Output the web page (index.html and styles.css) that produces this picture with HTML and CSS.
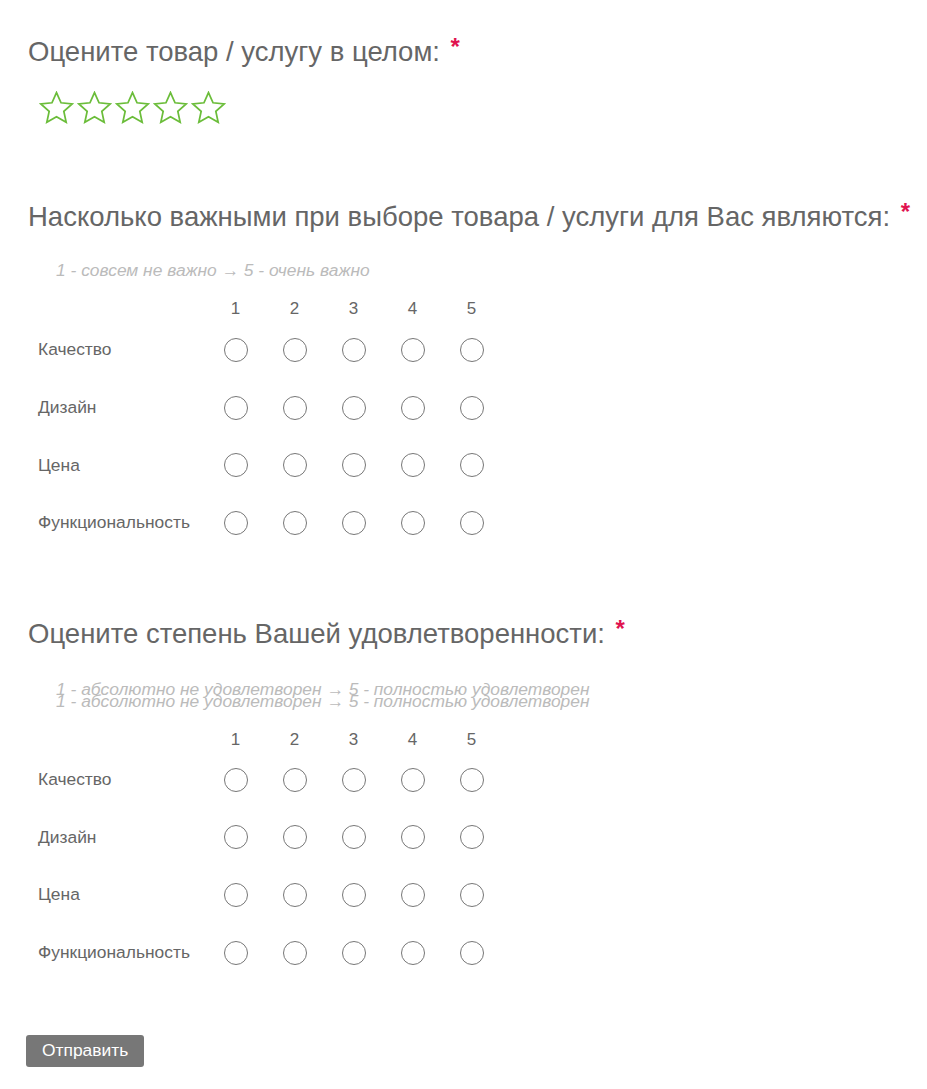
FILE: index.html
```html
<!DOCTYPE html>
<html lang="ru">
<head>
<meta charset="utf-8">
<title>Опрос</title>
<link rel="stylesheet" href="styles.css">
</head>
<body>
<form class="survey">
  <section class="q q-stars">
    <h2 class="q-title">Оцените товар / услугу в целом: <span class="req">*</span></h2>
    <div class="stars">
      <svg class="star" viewBox="0 0 34 33" width="35" height="34"><polygon points="17,1.5 21.41,11.43 32.22,12.56 24.13,19.82 26.4,30.44 17,25 7.6,30.44 9.87,19.82 1.78,12.56 12.59,11.43"/></svg>
      <svg class="star" viewBox="0 0 34 33" width="35" height="34"><polygon points="17,1.5 21.41,11.43 32.22,12.56 24.13,19.82 26.4,30.44 17,25 7.6,30.44 9.87,19.82 1.78,12.56 12.59,11.43"/></svg>
      <svg class="star" viewBox="0 0 34 33" width="35" height="34"><polygon points="17,1.5 21.41,11.43 32.22,12.56 24.13,19.82 26.4,30.44 17,25 7.6,30.44 9.87,19.82 1.78,12.56 12.59,11.43"/></svg>
      <svg class="star" viewBox="0 0 34 33" width="35" height="34"><polygon points="17,1.5 21.41,11.43 32.22,12.56 24.13,19.82 26.4,30.44 17,25 7.6,30.44 9.87,19.82 1.78,12.56 12.59,11.43"/></svg>
      <svg class="star" viewBox="0 0 34 33" width="35" height="34"><polygon points="17,1.5 21.41,11.43 32.22,12.56 24.13,19.82 26.4,30.44 17,25 7.6,30.44 9.87,19.82 1.78,12.56 12.59,11.43"/></svg>
    </div>
  </section>

  <section class="q q-matrix q-2">
    <h2 class="q-title">Насколько важными при выборе товара / услуги для Вас являются: <span class="req">*</span></h2>
    <p class="hint">1 - совсем не важно &rarr; 5 - очень важно</p>
    <div class="matrix">
      <div class="m-head"></div><div class="m-head">1</div><div class="m-head">2</div><div class="m-head">3</div><div class="m-head">4</div><div class="m-head">5</div>
      <div class="m-label">Качество</div><div class="m-cell"><span class="radio"></span></div><div class="m-cell"><span class="radio"></span></div><div class="m-cell"><span class="radio"></span></div><div class="m-cell"><span class="radio"></span></div><div class="m-cell"><span class="radio"></span></div>
      <div class="m-label">Дизайн</div><div class="m-cell"><span class="radio"></span></div><div class="m-cell"><span class="radio"></span></div><div class="m-cell"><span class="radio"></span></div><div class="m-cell"><span class="radio"></span></div><div class="m-cell"><span class="radio"></span></div>
      <div class="m-label">Цена</div><div class="m-cell"><span class="radio"></span></div><div class="m-cell"><span class="radio"></span></div><div class="m-cell"><span class="radio"></span></div><div class="m-cell"><span class="radio"></span></div><div class="m-cell"><span class="radio"></span></div>
      <div class="m-label">Функциональность</div><div class="m-cell"><span class="radio"></span></div><div class="m-cell"><span class="radio"></span></div><div class="m-cell"><span class="radio"></span></div><div class="m-cell"><span class="radio"></span></div><div class="m-cell"><span class="radio"></span></div>
    </div>
  </section>

  <section class="q q-matrix q-3">
    <h2 class="q-title">Оцените степень Вашей удовлетворенности: <span class="req">*</span></h2>
    <p class="hint hint-double"><span>1 - абсолютно не удовлетворен &rarr; 5 - полностью удовлетворен</span><span>1 - абсолютно не удовлетворен &rarr; 5 - полностью удовлетворен</span></p>
    <div class="matrix">
      <div class="m-head"></div><div class="m-head">1</div><div class="m-head">2</div><div class="m-head">3</div><div class="m-head">4</div><div class="m-head">5</div>
      <div class="m-label">Качество</div><div class="m-cell"><span class="radio"></span></div><div class="m-cell"><span class="radio"></span></div><div class="m-cell"><span class="radio"></span></div><div class="m-cell"><span class="radio"></span></div><div class="m-cell"><span class="radio"></span></div>
      <div class="m-label">Дизайн</div><div class="m-cell"><span class="radio"></span></div><div class="m-cell"><span class="radio"></span></div><div class="m-cell"><span class="radio"></span></div><div class="m-cell"><span class="radio"></span></div><div class="m-cell"><span class="radio"></span></div>
      <div class="m-label">Цена</div><div class="m-cell"><span class="radio"></span></div><div class="m-cell"><span class="radio"></span></div><div class="m-cell"><span class="radio"></span></div><div class="m-cell"><span class="radio"></span></div><div class="m-cell"><span class="radio"></span></div>
      <div class="m-label">Функциональность</div><div class="m-cell"><span class="radio"></span></div><div class="m-cell"><span class="radio"></span></div><div class="m-cell"><span class="radio"></span></div><div class="m-cell"><span class="radio"></span></div><div class="m-cell"><span class="radio"></span></div>
    </div>
  </section>

  <button type="button" class="submit">Отправить</button>
</form>
</body>
</html>
```

FILE: styles.css
```css
* { box-sizing: border-box; }
html, body { margin: 0; padding: 0; background: #fff; }
body {
  font-family: "Liberation Sans", Arial, sans-serif;
  color: #666;
}
.survey {
  padding: 37px 0 0 28px;
  display: flex;
  flex-direction: column;
  align-items: flex-start;
}
.q { margin: 0; }
.q-title {
  margin: 0;
  font-size: 27.5px;
  line-height: 30px;
  font-weight: normal;
  color: #666;
  white-space: nowrap;
}
.req {
  color: #e0134f;
  font-size: 24px;
  font-weight: bold;
  vertical-align: top;
  position: relative;
  top: -5px;
  margin-left: 3px;
}
.stars {
  display: flex;
  gap: 3px;
  margin: 24px 0 0 11px;
}
.star { display: block; }
.star polygon {
  fill: none;
  stroke: #6bbd3a;
  stroke-width: 1.7;
  stroke-linejoin: miter;
}
.q-2 { margin-top: 77px; }
.q-3 { margin-top: 67px; }
.hint {
  margin: 29px 0 0 28px;
  font-style: italic;
  font-size: 17.4px;
  line-height: 18px;
  color: #bbb;
  white-space: nowrap;
}
.hint-double {
  display: flex;
  flex-direction: column;
  line-height: 12px;
  margin-top: 34px;
  margin-left: 28px;
}
.matrix {
  display: grid;
  grid-template-columns: 168px repeat(5, 59px);
  grid-template-rows: 24px repeat(4, 57.7px);
  margin: 18px 0 0 10px;
}
.q-3 .matrix {
  margin-top: 22px;
  grid-template-rows: 22px repeat(4, 57.7px);
}
.m-head {
  display: flex;
  align-items: center;
  justify-content: center;
  font-size: 17px;
  color: #666;
}
.m-label {
  display: flex;
  align-items: center;
  font-size: 17.4px;
  color: #666;
  white-space: nowrap;
}
.m-cell {
  display: flex;
  align-items: center;
  justify-content: center;
}
.radio {
  display: block;
  width: 24px;
  height: 24px;
  border: 1px solid #777;
  border-radius: 50%;
  background: #fff;
}
.submit {
  margin: 53px 0 0 -2px;
  height: 32px;
  padding: 0 16px;
  border: 0;
  border-radius: 3px;
  background: #777;
  color: #fff;
  font-family: "Liberation Sans", Arial, sans-serif;
  font-size: 17.4px;
}
```
